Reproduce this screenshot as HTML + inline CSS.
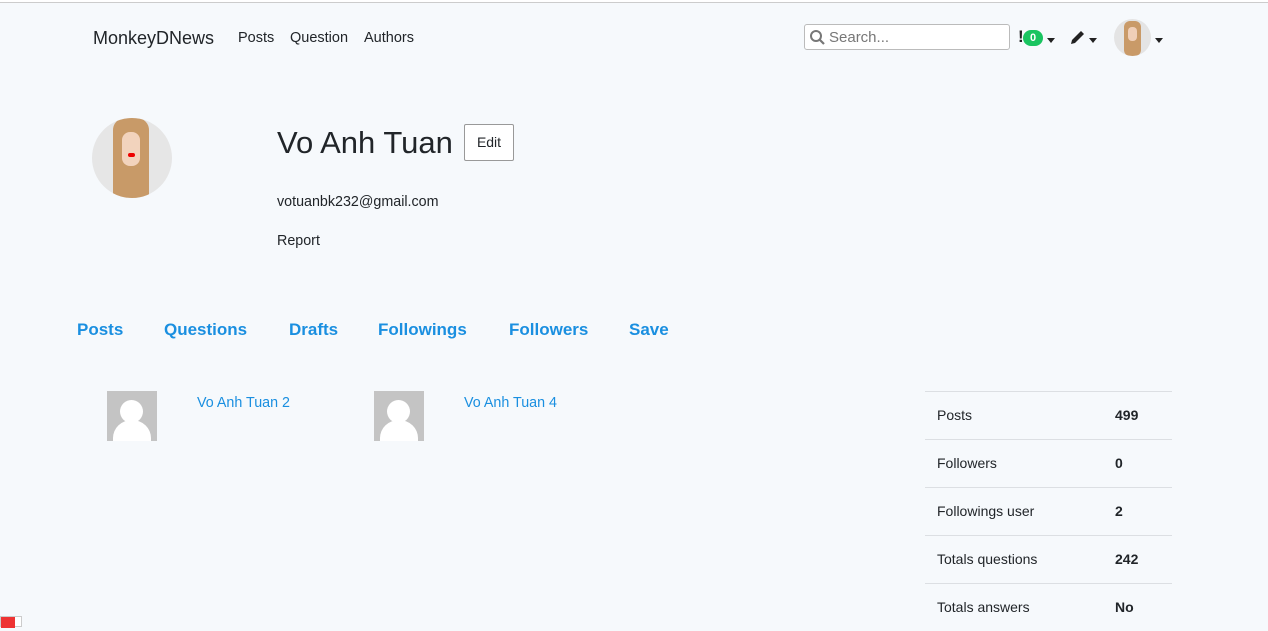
<!DOCTYPE html>
<html><head><meta charset="utf-8"><style>
*{box-sizing:border-box;margin:0;padding:0}
body{width:1268px;height:627px;overflow:hidden;background:#f6f9fc;font-family:"Liberation Sans",sans-serif;color:#212529;position:relative}
.topline{position:absolute;left:0;top:0;width:1268px;height:3px;background:#fff;border-bottom:1px solid #ccc}
.a{position:absolute;white-space:nowrap}
.nav{font-size:14.5px;color:#212529}
.tab{font-size:17px;font-weight:bold;color:#1a8fe0}
.stat{position:absolute;left:925px;width:247px;border-top:1px solid #dcdfe3;height:48px;font-size:14px}
.stat span{position:absolute;top:15px}
.ph{position:absolute;width:50px;height:50px;background:#c4c4c4;overflow:hidden}
.ph i{position:absolute;left:13px;top:9px;width:23px;height:23px;border-radius:50%;background:#fff}
.ph b{position:absolute;left:6px;top:29px;width:38px;height:36px;border-radius:50% 50% 0 0;background:#fff}
.car{display:inline-block;border-left:4px solid transparent;border-right:4px solid transparent;border-top:5px solid #222;vertical-align:middle}
</style></head><body>
<div class="topline"></div>
<div class="a" style="left:93px;top:28px;font-size:18px">MonkeyDNews</div>
<div class="a nav" style="left:238px;top:30px">Posts</div>
<div class="a nav" style="left:290px;top:30px">Question</div>
<div class="a nav" style="left:364px;top:30px">Authors</div>
<div class="a" style="left:804px;top:24px;width:206px;height:26px;background:#fff;border:1px solid #bbb;border-radius:3px"></div>
<svg class="a" style="left:809px;top:29px" width="17" height="17" viewBox="0 0 17 17"><circle cx="7" cy="7" r="5" fill="none" stroke="#777" stroke-width="2"/><line x1="10.5" y1="10.5" x2="15" y2="15" stroke="#777" stroke-width="2.2"/></svg>
<div class="a" style="left:829px;top:29px;font-size:15px;color:#777">Search...</div>
<div class="a" style="left:1018px;top:27px;font-size:17px;font-weight:bold;color:#222">!</div>
<div class="a" style="left:1023px;top:30px;width:20px;height:16px;border-radius:8px;background:#19c460;color:#fff;font-size:11px;font-weight:bold;text-align:center;line-height:16px">0</div>
<div class="a" style="left:1047px;top:32px"><span class="car"></span></div>
<svg class="a" style="left:1070px;top:29px" width="16" height="16" viewBox="0 0 16 16"><path d="M1 15 L2 11 L11 2 L14 5 L5 14 Z" fill="#222"/></svg>
<div class="a" style="left:1089px;top:32px"><span class="car"></span></div>
<div class="a" style="left:1114px;top:19px;width:37px;height:37px;border-radius:50%;background:#e4e4e4;overflow:hidden"><div style="position:absolute;left:10px;top:2px;width:17px;height:35px;background:#c99a68;border-radius:6px"></div><div style="position:absolute;left:14px;top:8px;width:9px;height:14px;background:#f0cfb8;border-radius:4px"></div></div>
<div class="a" style="left:1155px;top:32px"><span class="car"></span></div>

<div class="a" style="left:92px;top:118px;width:80px;height:80px;border-radius:50%;background:#e6e6e6;overflow:hidden"><div style="position:absolute;left:21px;top:0;width:36px;height:80px;background:#c89a68;border-radius:12px 12px 0 0"></div><div style="position:absolute;left:30px;top:14px;width:18px;height:34px;background:#f2d3bd;border-radius:8px"></div><div style="position:absolute;left:36px;top:35px;width:7px;height:4px;background:#e00;border-radius:2px"></div></div>
<div class="a" style="left:277px;top:125px;font-size:31px">Vo Anh Tuan</div>
<div class="a" style="left:464px;top:124px;width:50px;height:37px;border:1px solid #999;border-radius:2px;background:#fff;font-size:14px;text-align:center;line-height:35px">Edit</div>
<div class="a" style="left:277px;top:194px;font-size:14.3px">votuanbk232@gmail.com</div>
<div class="a" style="left:277px;top:233px;font-size:14.3px">Report</div>

<div class="a tab" style="left:77px;top:320px">Posts</div>
<div class="a tab" style="left:164px;top:320px">Questions</div>
<div class="a tab" style="left:289px;top:320px">Drafts</div>
<div class="a tab" style="left:378px;top:320px">Followings</div>
<div class="a tab" style="left:509px;top:320px">Followers</div>
<div class="a tab" style="left:629px;top:320px">Save</div>

<div class="ph" style="left:107px;top:391px"><i></i><b></b></div>
<div class="a" style="left:197px;top:395px;font-size:14.3px;color:#1a8fe0">Vo Anh Tuan 2</div>
<div class="ph" style="left:374px;top:391px"><i></i><b></b></div>
<div class="a" style="left:464px;top:395px;font-size:14.3px;color:#1a8fe0">Vo Anh Tuan 4</div>

<div class="stat" style="top:391px"><span style="left:12px">Posts</span><span style="left:190px;font-weight:bold">499</span></div>
<div class="stat" style="top:439px"><span style="left:12px">Followers</span><span style="left:190px;font-weight:bold">0</span></div>
<div class="stat" style="top:487px"><span style="left:12px">Followings user</span><span style="left:190px;font-weight:bold">2</span></div>
<div class="stat" style="top:535px"><span style="left:12px">Totals questions</span><span style="left:190px;font-weight:bold">242</span></div>
<div class="stat" style="top:583px"><span style="left:12px">Totals answers</span><span style="left:190px;font-weight:bold">No</span></div>

<div class="a" style="left:0;top:616px;width:22px;height:11px;border:1px solid #ccc;background:#fff"><div style="width:14px;height:11px;background:#e33"></div></div>
</body></html>
